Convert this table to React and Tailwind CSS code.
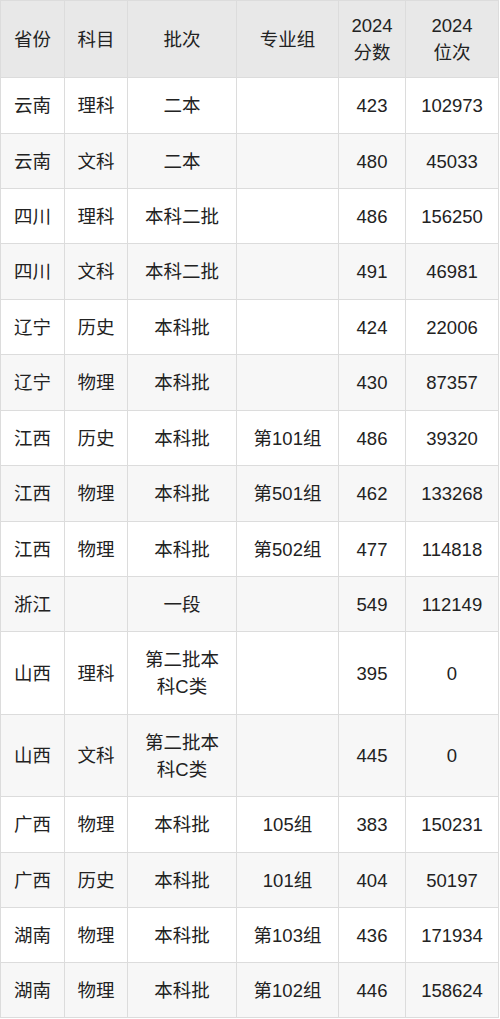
import React from "react";

const rows = [
  ["云南", "理科", "二本", "", "423", "102973", 56],
  ["云南", "文科", "二本", "", "480", "45033", 55],
  ["四川", "理科", "本科二批", "", "486", "156250", 55],
  ["四川", "文科", "本科二批", "", "491", "46981", 56],
  ["辽宁", "历史", "本科批", "", "424", "22006", 55],
  ["辽宁", "物理", "本科批", "", "430", "87357", 56],
  ["江西", "历史", "本科批", "第101组", "486", "39320", 55],
  ["江西", "物理", "本科批", "第501组", "462", "133268", 56],
  ["江西", "物理", "本科批", "第502组", "477", "114818", 55],
  ["浙江", "", "一段", "", "549", "112149", 55],
  ["山西", "理科", "第二批本科C类", "", "395", "0", 83],
  ["山西", "文科", "第二批本科C类", "", "445", "0", 82],
  ["广西", "物理", "本科批", "105组", "383", "150231", 56],
  ["广西", "历史", "本科批", "101组", "404", "50197", 55],
  ["湖南", "物理", "本科批", "第103组", "436", "171934", 55],
  ["湖南", "物理", "本科批", "第102组", "446", "158624", 55],
];

const grid = "grid grid-cols-[64px_63px_109px_102px_67px_93px]";
const cell = "flex items-center justify-center text-center border-r border-[#dcdcdc] px-1";

export default function App() {
  return (
    <div
      className="w-[500px] h-[1019px] bg-white text-[#222] text-[18.5px] leading-[27px] overflow-hidden"
      style={{ fontFamily: '"Liberation Sans", "Noto Sans CJK SC", sans-serif' }}
    >
      <div className="border-l border-t border-[#dcdcdc] w-[499px]">
        <div className={`${grid} h-[77px] bg-[#e8e8e8] border-b border-[#dcdcdc]`}>
          <div className={cell}>省份</div>
          <div className={cell}>科目</div>
          <div className={cell}>批次</div>
          <div className={cell}>专业组</div>
          <div className={cell}>
            <span>2024<br />分数</span>
          </div>
          <div className={cell}>
            <span>2024<br />位次</span>
          </div>
        </div>
        {rows.map((r, i) => (
          <div
            key={i}
            className={`${grid} border-b border-[#dcdcdc] ${i % 2 === 1 ? "bg-[#f7f7f7]" : "bg-white"}`}
            style={{ height: r[6] }}
          >
            <div className={cell}>{r[0]}</div>
            <div className={cell}>{r[1]}</div>
            <div className={cell}>
              {r[2] === "第二批本科C类" ? (
                <span>第二批本<br />科C类</span>
              ) : (
                r[2]
              )}
            </div>
            <div className={cell}>{r[3]}</div>
            <div className={cell}>{r[4]}</div>
            <div className={cell}>{r[5]}</div>
          </div>
        ))}
      </div>
    </div>
  );
}
